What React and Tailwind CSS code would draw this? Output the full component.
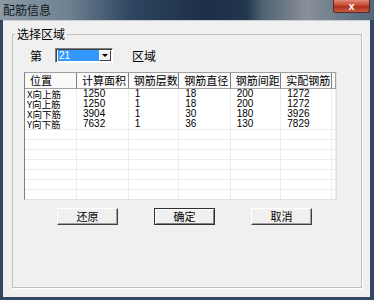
import React from "react";

const cols = [
  { title: "位置", w: "w-[52px]" },
  { title: "计算面积", w: "w-[52px]" },
  { title: "钢筋层数", w: "w-[51px]" },
  { title: "钢筋直径", w: "w-[52px]" },
  { title: "钢筋间距", w: "w-[51px]" },
  { title: "实配钢筋", w: "w-[51px]" },
];

const rows = [
  ["X向上筋", "1250", "1", "18", "200", "1272"],
  ["Y向上筋", "1250", "1", "18", "200", "1272"],
  ["X向下筋", "3904", "1", "30", "180", "3926"],
  ["Y向下筋", "7632", "1", "36", "130", "7829"],
];

const cjk = "font-['SimSun','Noto_Sans_CJK_SC',sans-serif]";

function Btn({ label, main }) {
  return (
    <button
      className={
        "w-[61px] h-[17px] bg-[#f0f0f0] text-[11px] leading-[11px] text-black flex items-center justify-center " +
        (main
          ? "border border-[#303030] shadow-[inset_1px_1px_0_#fff,inset_-1px_-1px_0_#808080]"
          : "border border-t-white border-l-white border-b-[#404040] border-r-[#404040] shadow-[inset_-1px_-1px_0_#a0a0a0]")
      }
    >
      {label}
    </button>
  );
}

export default function App() {
  const empty = Array.from({ length: 8 });
  return (
    <div className={"w-[374px] h-[300px] bg-[#33485e] flex flex-col overflow-hidden " + cjk}>
      {/* title bar */}
      <div className="h-[20px] flex justify-between items-start bg-[linear-gradient(90deg,#8c9aa5_0%,#6f8292_18%,#2e4660_35%,#1b2f46_55%,#22384f_66%,#4d6170_70%,#8b9099_82%,#6d7d8c_90%,#526679_100%)]">
        <span className="text-[12px] leading-[12px] text-[#101820] pl-[3px] pt-[4px]">配筋信息</span>
        <div className="mr-[4px] w-[37px] h-[13px] rounded-b-[3px] border border-t-0 border-[#5a2a22] bg-[linear-gradient(180deg,#e08a78_0%,#c8452c_45%,#b0301c_55%,#c85a40_100%)] flex items-center justify-center">
          <span className="text-white text-[11px] leading-[11px] font-bold font-['Liberation_Sans',sans-serif]">x</span>
        </div>
      </div>

      {/* client */}
      <div className="ml-[3px] w-[367px] h-[277px] bg-[#f0f0f0] border-t border-[#c8ced4]">
        <fieldset className="ml-[9px] mt-[7px] w-[350px] h-[260px] border border-[#c0c0c0] shadow-[1px_1px_0_#fff] pl-[11px]">
          <legend className="ml-[-9px] px-[2px] text-[12px] leading-[12px] text-black">选择区域</legend>

          <div className="flex items-center h-[15px] mt-[8px]">
            <span className="text-[12px] leading-[12px] ml-[6px] w-[25px]">第</span>
            <div className="w-[58px] h-[15px] bg-white border border-t-[#808080] border-l-[#808080] border-b-white border-r-white shadow-[inset_1px_1px_0_#404040] flex items-center pl-[2px] pr-[1px]">
              <div className="flex-1 h-[11px] bg-[#3399ff] text-white text-[10px] leading-[11px] font-['Liberation_Sans',sans-serif] pl-[1px]">21</div>
              <div className="w-[12px] h-[11px] bg-[#f0f0f0] border border-t-white border-l-white border-b-[#404040] border-r-[#404040] flex items-center justify-center">
                <svg width="6" height="3" viewBox="0 0 6 3"><path d="M0 0h6L3 3z" fill="#000" /></svg>
              </div>
            </div>
            <span className="text-[12px] leading-[12px] ml-[19px]">区域</span>
          </div>

          <div className="mt-[9px] w-[313px] h-[128px] bg-white border border-t-[#a0a0a0] border-l-[#808080] border-b-[#e0e0e0] border-r-[#e0e0e0] overflow-hidden">
            <table className="table-fixed border-collapse">
              <thead>
                <tr className="h-[15px]">
                  {cols.map((c) => (
                    <th
                      key={c.title}
                      className={c.w + " p-0 pl-[5px] text-left font-normal text-[11px] leading-[11px] bg-[#fafafa] border-r border-b border-r-[#808080] border-b-[#a0a0a0]"}
                    >
                      {c.title}
                    </th>
                  ))}
                  <th className="w-[4px] p-0 bg-[#fafafa] border-b border-r border-[#a0a0a0]"></th>
                </tr>
              </thead>
              <tbody className="font-['Liberation_Sans',sans-serif] text-[10px] leading-[10px]">
                {rows.map((r, i) => (
                  <tr key={i} className="h-[10px]">
                    {r.map((v, j) => (
                      <td
                        key={j}
                        className={
                          "p-0 h-[10px] border-r border-[#ececec] " +
                          (j === 0 ? "pl-[2px] text-[9.5px] leading-[10px] " + cjk : "pl-[6px]")
                        }
                      >
                        {v}
                      </td>
                    ))}
                    <td className="p-0 border-r border-[#ececec]"></td>
                  </tr>
                ))}
                {empty.map((_, i) => (
                  <tr key={"e" + i} className="h-[10px] border-t border-[#ececec]">
                    {cols.map((c) => (
                      <td key={c.title} className="p-0 border-r border-[#ececec]"></td>
                    ))}
                    <td className="p-0 border-r border-[#ececec]"></td>
                  </tr>
                ))}
              </tbody>
            </table>
          </div>

          <div className="flex mt-[8px] ml-[33px] gap-[36px]">
            <Btn label="还原" />
            <Btn label="确定" main />
            <Btn label="取消" />
          </div>
        </fieldset>
      </div>
    </div>
  );
}
